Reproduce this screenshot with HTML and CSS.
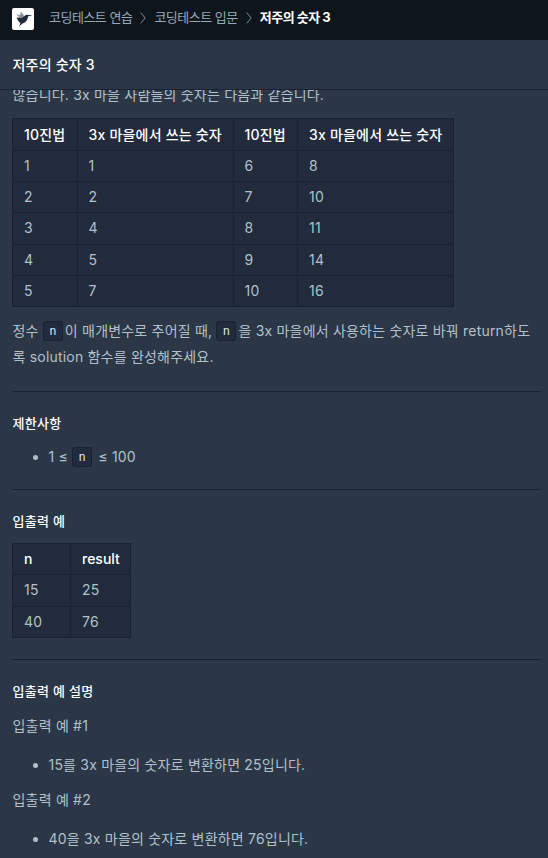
FILE: index.html
```
<!DOCTYPE html>
<html lang="ko">
<head>
  <meta charset="UTF-8" />
  <meta name="viewport" content="width=device-width, initial-scale=1.0"/>
  <title>저주의 숫자 3</title>
  <link rel="stylesheet" href="styles.css">
</head>
<body>
<header class="navbar">
  <a class="logo" href="#" aria-label="홈">
    <svg width="22" height="22" viewBox="0 0 22 22">
      <rect width="22" height="22" rx="2" fill="#fff"/>
      <path d="M4.200 6 8 7.200 9 3.500l4 5.500-2 3-5-1.500 1-1z" fill="#8b929c"/>
      <path d="M4.500 9.300c3 1.200 5 1 7.500-.8 1.200-1.300 2.500-1.900 3.800-1.600l4.700.3-4.500 1.300c-.3 3.700-2.200 6-5.400 6.900L7 18.300l1.500-3.300c-1.700-1.200-3-3-4-5.700z" fill="#202b3d"/>
    </svg>
  </a>
  <ol class="breadcrumb">
    <li><a href="#">코딩테스트 연습</a></li>
    <li><svg class="arrow" width="6" height="12" viewBox="0 0 6 12"><path d="M.7.7 5.200 6 .7 11.300"/></svg></li>
    <li><a href="#">코딩테스트 입문</a></li>
    <li><svg class="arrow" width="6" height="12" viewBox="0 0 6 12"><path d="M.7.7 5.200 6 .7 11.300"/></svg></li>
    <li class="active">저주의 숫자 3</li>
  </ol>
</header>
<div class="challenge-title">저주의 숫자 3</div>
<main class="guide">
  <div class="markdown">
    <p class="intro">않습니다. 3x 마을 사람들의 숫자는 다음과 같습니다.</p>
    <table class="numbers">
      <thead>
        <tr><th>10진법</th><th>3x 마을에서 쓰는 숫자</th><th>10진법</th><th>3x 마을에서 쓰는 숫자</th></tr>
      </thead>
      <tbody>
        <tr><td>1</td><td>1</td><td>6</td><td>8</td></tr>
        <tr><td>2</td><td>2</td><td>7</td><td>10</td></tr>
        <tr><td>3</td><td>4</td><td>8</td><td>11</td></tr>
        <tr><td>4</td><td>5</td><td>9</td><td>14</td></tr>
        <tr><td>5</td><td>7</td><td>10</td><td>16</td></tr>
      </tbody>
    </table>
    <p>정수 <code>n</code>이 매개변수로 주어질 때, <code>n</code>을 3x 마을에서 사용하는 숫자로 바꿔 return하도록 solution 함수를 완성해주세요.</p>
    <hr>
    <h5>제한사항</h5>
    <ul>
      <li>1 ≤ <code>n</code> ≤ 100</li>
    </ul>
    <hr>
    <h5>입출력 예</h5>
    <table class="examples">
      <thead>
        <tr><th>n</th><th>result</th></tr>
      </thead>
      <tbody>
        <tr><td>15</td><td>25</td></tr>
        <tr><td>40</td><td>76</td></tr>
      </tbody>
    </table>
    <hr>
    <h5>입출력 예 설명</h5>
    <p class="case">입출력 예 #1</p>
    <ul>
      <li>15를 3x 마을의 숫자로 변환하면 25입니다.</li>
    </ul>
    <p class="case">입출력 예 #2</p>
    <ul>
      <li>40을 3x 마을의 숫자로 변환하면 76입니다.</li>
    </ul>
  </div>
</main>
</body>
</html>
```
FILE: styles.css
```
* {
  box-sizing: border-box;
}

body {
  margin: 0;
  height: 100vh;
  display: flex;
  flex-direction: column;
  overflow: hidden;
  background: #2b3746;
  color: #b2c0cc;
  font-family: Inter, "Noto Sans CJK KR", sans-serif;
  font-size: 14px;
  letter-spacing: 0.2px;
}

.navbar {
  flex: none;
  display: flex;
  align-items: center;
  height: 40px;
  padding: 0 12px 3px;
  background: #0f161b;
}
.logo {
  display: flex;
}
.breadcrumb {
  display: flex;
  align-items: center;
  gap: 8px;
  margin: 0 0 3px 15px;
  padding: 0;
  list-style: none;
  font-size: 13px;
  line-height: 20px;
  letter-spacing: -0.5px;
  white-space: nowrap;
}
.breadcrumb li {
  display: flex;
  align-items: center;
}
.breadcrumb a {
  color: #98a8b9;
  text-decoration: none;
}
.breadcrumb .active {
  color: #fff;
  font-weight: 700;
}
.arrow {
  margin-top: 2px;
  fill: none;
  stroke: #78909c;
  stroke-width: 1;
}

.challenge-title {
  flex: none;
  height: 50px;
  padding: 0 12.500px;
  line-height: 49px;
  color: #fff;
  font-weight: 500;
  border-bottom: 1px solid #172334;
}

.guide {
  flex: 1;
  min-height: 0;
  overflow: hidden;
  padding: 0 7px 0 12px;
}
.markdown {
  margin-top: -8px;
  line-height: 26px;
}
.markdown p {
  margin: 0;
  padding-left: 0.5px;
}
.markdown .intro {
  margin-bottom: 10px;
}
.markdown table {
  border-collapse: collapse;
  table-layout: fixed;
  background: #222b3c;
  line-height: 20px;
}
.numbers {
  width: 442px;
  margin-bottom: 11px;
}
.numbers th:nth-child(odd) {
  width: 64.500px;
}
.examples {
  width: 119px;
}
.examples th:first-child {
  width: 58px;
}
.markdown th,
.markdown td {
  height: 31.33px;
  padding: 0 11px;
  border: 1px solid #172334;
  text-align: left;
  white-space: nowrap;
}
.markdown th {
  color: #fff;
  font-weight: 500;
}
.markdown .numbers th {
  height: 32px;
  padding-top: 1px;
}
.markdown .numbers td {
  height: 31.2px;
}
.markdown .examples th {
  letter-spacing: 0;
}
.markdown hr {
  height: 1px;
  margin: 21px 0 19px;
  border: 0;
  background: #172334;
}
.markdown ul + hr {
  margin-top: 19px;
}
.markdown h5 {
  margin: 0 0 10px;
  padding-left: 0.5px;
  color: #fff;
  font-size: 13px;
  font-weight: 500;
  line-height: 24px;
  letter-spacing: 0.3px;
}
.markdown ul {
  margin: 0;
  padding-left: 36.500px;
}
.markdown h5 + ul {
  margin-top: -1px;
}
.markdown code {
  margin-right: 2px;
  padding: 2px 5.400px;
  border: 1px solid #172334;
  border-radius: 3px;
  background: #222b3c;
  color: #dce3ea;
  font-family: "DejaVu Sans Mono", monospace;
  font-size: 12px;
  line-height: 18px;
  letter-spacing: 0;
  vertical-align: 1px;
}
.markdown .case {
  margin-bottom: 13px;
}
.markdown ul + .case {
  margin-top: 9px;
}
```
